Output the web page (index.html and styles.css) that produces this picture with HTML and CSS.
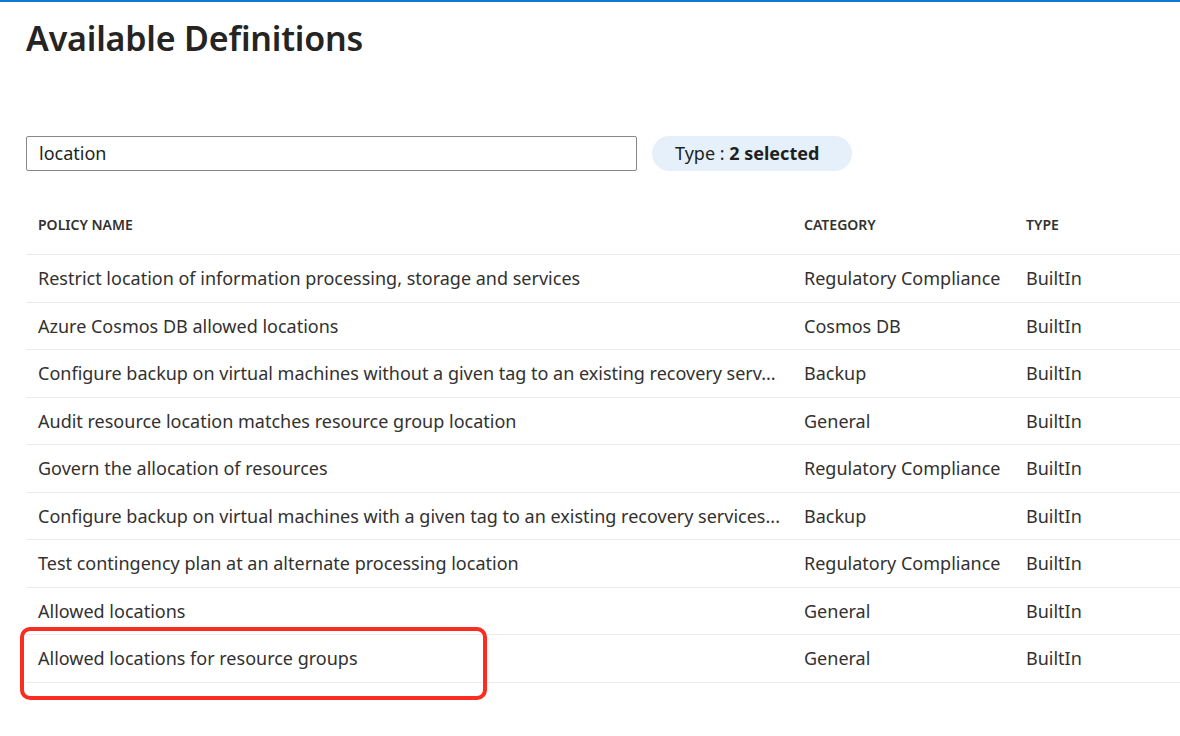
FILE: index.html
```html
<!DOCTYPE html>
<html>
<head>
<meta charset="utf-8">
<link rel="stylesheet" href="styles.css">
</head>
<body>
<div class="topbar"></div>
<main class="page">
  <h1 class="title">Available Definitions</h1>
  <div class="filters">
    <div class="search">location</div>
    <div class="pill">Type : <b>2 selected</b></div>
  </div>
  <div class="table">
    <div class="row head">
      <div class="cell">POLICY NAME</div>
      <div class="cell">CATEGORY</div>
      <div class="cell">TYPE</div>
    </div>
    <div class="row">
      <div class="cell name">Restrict location of information processing, storage and services</div>
      <div class="cell">Regulatory Compliance</div>
      <div class="cell">BuiltIn</div>
    </div>
    <div class="row">
      <div class="cell name">Azure Cosmos DB allowed locations</div>
      <div class="cell">Cosmos DB</div>
      <div class="cell">BuiltIn</div>
    </div>
    <div class="row">
      <div class="cell name">Configure backup on virtual machines without a given tag to an existing recovery serv...</div>
      <div class="cell">Backup</div>
      <div class="cell">BuiltIn</div>
    </div>
    <div class="row">
      <div class="cell name">Audit resource location matches resource group location</div>
      <div class="cell">General</div>
      <div class="cell">BuiltIn</div>
    </div>
    <div class="row">
      <div class="cell name">Govern the allocation of resources</div>
      <div class="cell">Regulatory Compliance</div>
      <div class="cell">BuiltIn</div>
    </div>
    <div class="row">
      <div class="cell name">Configure backup on virtual machines with a given tag to an existing recovery services...</div>
      <div class="cell">Backup</div>
      <div class="cell">BuiltIn</div>
    </div>
    <div class="row">
      <div class="cell name">Test contingency plan at an alternate processing location</div>
      <div class="cell">Regulatory Compliance</div>
      <div class="cell">BuiltIn</div>
    </div>
    <div class="row">
      <div class="cell name">Allowed locations</div>
      <div class="cell">General</div>
      <div class="cell">BuiltIn</div>
    </div>
    <div class="row highlighted">
      <div class="cell name">Allowed locations for resource groups</div>
      <div class="cell">General</div>
      <div class="cell">BuiltIn</div>
      <div class="mark"></div>
    </div>
  </div>
</main>
</body>
</html>
```

FILE: styles.css
```css
* { box-sizing: border-box; }
html, body { margin: 0; padding: 0; background: #fff; }
body {
  font-family: "Noto Sans", "Open Sans", sans-serif;
  color: #323130;
  width: 1180px;
  height: 736px;
  overflow: hidden;
}
.topbar {
  height: 2px;
  background: #0f78d4;
}
.page {
  padding: 0 0 0 26px;
}
.title {
  margin: 0;
  padding-top: 13px;
  font-size: 34px;
  line-height: 46px;
  font-weight: 600;
  color: #252423;
  letter-spacing: -0.2px;
}
.filters {
  display: flex;
  align-items: center;
  gap: 15px;
  margin-top: 75px;
}
.search {
  width: 611px;
  height: 35px;
  border: 1px solid #8a8886;
  border-radius: 2px;
  padding: 0 12px;
  font-size: 18px;
  line-height: 33px;
  color: #201f1e;
}
.pill {
  height: 35px;
  padding: 0 33px 0 23px;
  border-radius: 18px;
  background: #e5f0fb;
  font-size: 18px;
  line-height: 35px;
  color: #201f1e;
}
.pill b { font-weight: 700; }
.table {
  margin-top: 30px;
}
.row {
  position: relative;
  display: grid;
  grid-template-columns: 766px 222px 1fr;
  height: 47.5px;
  align-items: center;
  border-bottom: 1px solid #edebe9;
}
.row.head {
  height: 54px;
  align-items: center;
}
.cell {
  padding: 0 12px;
  font-size: 18px;
  white-space: nowrap;
  overflow: hidden;
  text-overflow: ellipsis;
}
.cell.name {
  padding-right: 0;
}
.row.head .cell {
  font-size: 14px;
  font-weight: 600;
  color: #323130;
  padding-bottom: 6px;
}
.mark {
  position: absolute;
  left: -6px;
  top: -8px;
  width: 467px;
  height: 73px;
  border: 4.5px solid #fb2c20;
  border-radius: 10px;
}
```
